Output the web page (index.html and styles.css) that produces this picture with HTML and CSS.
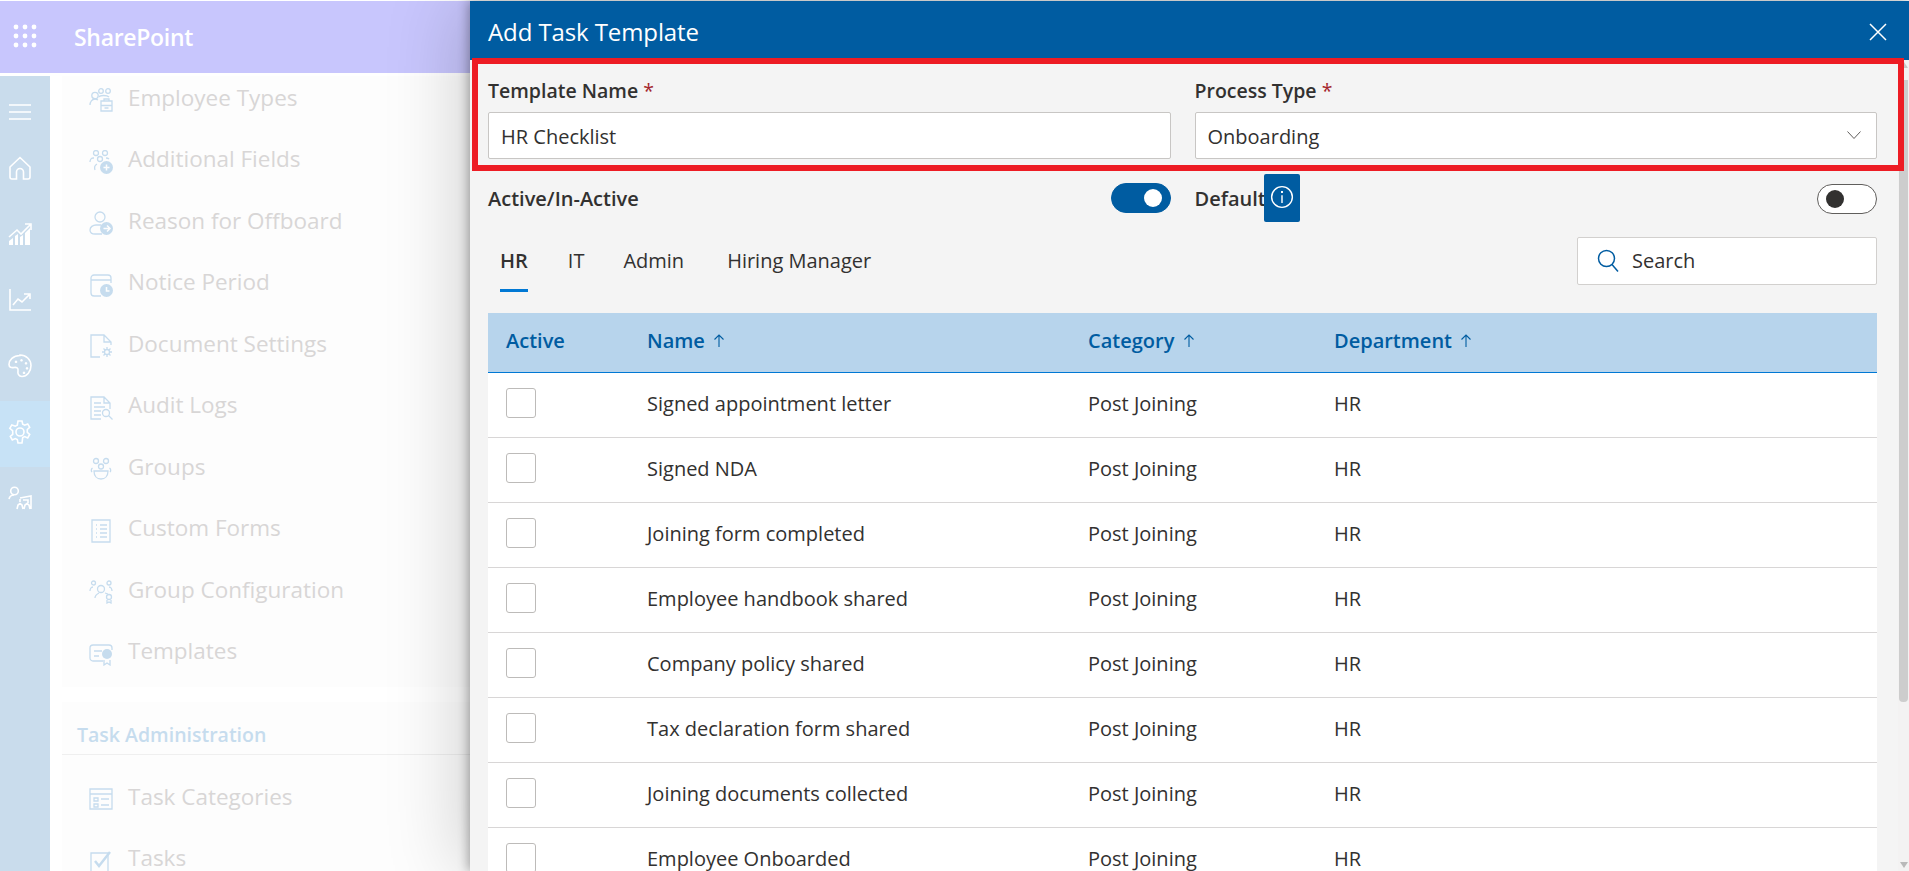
FILE: index.html
```html
<!DOCTYPE html>
<html>
<head>
    <title>Add Task Template</title>
    <meta charset="utf-8">
    <link rel="stylesheet" href="styles.css">
</head>
<body>
    <div class="suite-bar">
        <svg class="waffle" viewBox="0 0 24 24"><g fill="#fff"><circle cx="3" cy="3" r="2.400"/><circle cx="12" cy="3" r="2.400"/><circle cx="21" cy="3" r="2.400"/><circle cx="3" cy="12" r="2.400"/><circle cx="12" cy="12" r="2.400"/><circle cx="21" cy="12" r="2.400"/><circle cx="3" cy="21" r="2.400"/><circle cx="12" cy="21" r="2.400"/><circle cx="21" cy="21" r="2.400"/></g></svg>
        <span class="suite-name">SharePoint</span>
    </div>

    <div class="app-body">
        <div class="rail">
            <div class="rail-item rail-menu"><svg viewBox="0 0 24 24"><path d="M1 5h22M1 12h22M1 19h22"/></svg></div>
            <div class="rail-item"><svg viewBox="0 0 24 24"><path d="M2 11 12 1.500 22 11v10a2 2 0 0 1-2 2h-4.500v-7a3.500 3.500 0 0 0-7 0v7H4a2 2 0 0 1-2-2z"/></svg></div>
            <div class="rail-item"><svg viewBox="0 0 24 24"><path d="M1 15 9 8l4 4 9-9M17 2h6v6"/><path class="solid" d="M1 23v-4l4-3v7zM7 23v-9l3-2v11zM12 23v-8l3-2v10zM17 23V11l5-5v17z"/></svg></div>
            <div class="rail-item"><svg viewBox="0 0 24 24"><path d="M2 1v21h21M5 17l5-6 4 3 7-7M16 6h6v5"/></svg></div>
            <div class="rail-item"><svg viewBox="0 0 24 24"><path d="M12 1.500C5 1.500 1 6 1 10.500c0 3 2.500 3.500 5 3 2.500-.5 4.500.5 4 3-.5 3 .5 6 4 6 5 0 9-5 9-11s-5-10.500-11-10.500z"/><path class="solid" d="M8 6.500a1.300 1.300 0 1 0 .01 0zM13.500 5a1.300 1.300 0 1 0 .01 0zM18 8a1.300 1.300 0 1 0 .01 0zM19 13a1.300 1.300 0 1 0 .01 0zM16 17.500a1.300 1.300 0 1 0 .01 0z"/></svg></div>
            <div class="rail-item rail-active"><svg viewBox="0 0 24 24"><circle cx="12" cy="12" r="4"/><path d="M10 1h4l.7 3.200 2 1 3-1.300 2 3.400-2.400 2.200v2.800l2.400 2.200-2 3.400-3-1.300-2 1L14 23h-4l-.7-3.400-2-1-3 1.300-2-3.400 2.400-2.200V12l-.1-1.300L1.800 8.300l2-3.400 3.500 1.300 2-1z"/></svg></div>
            <div class="rail-item"><svg viewBox="0 0 24 24"><circle cx="6.500" cy="5" r="3.800"/><path d="M1 13c.5-2 2.500-4 5-4M9 23l1-4 2-1.500 2 1.500 1 4M16 23l1-4 2-1.500 2 1.500 1 4M12 12l11-2v13M12 13v3M15 14h5v3"/></svg></div>
        </div>

        <div class="menu">
            <div class="menu-item"><svg viewBox="0 0 24 24"><circle cx="6" cy="7.500" r="3.200"/><circle cx="12" cy="3" r="2.300"/><circle cx="19" cy="3" r="2.300"/><path d="M1 17c0-3 2-6 5-6 1 0 2 .5 3 1M10 9c1-2 8-2 10 0M12 13h11v10H12zM12 17.500h11M15.500 20h4M15 13v-2h5v2"/></svg><span>Employee Types</span></div>
            <div class="menu-item"><svg viewBox="0 0 24 24"><circle cx="7" cy="3" r="2.500"/><circle cx="16" cy="3" r="2.500"/><circle cx="11" cy="9" r="2.500"/><path d="M1 12c0-2 1-4 3-4h1M20 9c-1-1-2-1-3-1M6 20c-1-3 0-5 2-6"/><circle class="solid" cx="17.500" cy="17.500" r="6.500"/><path class="on-solid" d="M17.500 14.500v6M14.500 17.500h6"/></svg><span>Additional Fields</span></div>
            <div class="menu-item"><svg viewBox="0 0 24 24"><circle cx="11" cy="6" r="5"/><path d="M13 23H6c-3 0-5-1-5-4 0-3 3-5 6-5h5"/><circle class="solid" cx="17.500" cy="17.500" r="6.500"/><path class="on-solid" d="M14.500 17.500h6M18 14.500l3 3-3 3"/></svg><span>Reason for Offboard</span></div>
            <div class="menu-item"><svg viewBox="0 0 24 24"><path d="M2 5a3 3 0 0 1 3-3h14a3 3 0 0 1 3 3v5M2 5v15a3 3 0 0 0 3 3h7M2 7h20"/><circle class="solid" cx="17.500" cy="17.500" r="6.500"/><path class="on-solid" d="M17.500 14v4h3"/></svg><span>Notice Period</span></div>
            <div class="menu-item"><svg viewBox="0 0 24 24"><path d="M11 23H2V1h13l7 7v3M15 1v7h7"/><circle cx="18" cy="18" r="2.500"/><path d="M18 13v2M18 21v2M13 18h2M21 18h2M14.500 14.500 16 16M20 20l1.500 1.500M14.500 21.500 16 20M20 16l1.500-1.500"/></svg><span>Document Settings</span></div>
            <div class="menu-item"><svg viewBox="0 0 24 24"><path d="M12 23H2V1h13l6 6v6M15 1v6h6M5 7h7M5 11h11M5 15h7M5 19h7"/><circle cx="17" cy="17" r="3.500"/><path d="m19.500 19.500 4 4"/></svg><span>Audit Logs</span></div>
            <div class="menu-item"><svg viewBox="0 0 24 24"><circle cx="7" cy="4" r="2.500"/><circle cx="17" cy="4" r="2.500"/><circle cx="12" cy="9.500" r="2.500"/><path d="M3 15c-1-1-1-3 .5-4M21 15c1-1 1-3-.5-4M5 14h14c0 5-3 8-7 8s-7-3-7-8z"/></svg><span>Groups</span></div>
            <div class="menu-item"><svg viewBox="0 0 24 24"><path d="M3 1h18v22H3zM7 6h1M11 6h7M7 10h1M11 10h7M7 14h1M11 14h7M7 18h1M11 18h7"/></svg><span>Custom Forms</span></div>
            <div class="menu-item"><svg viewBox="0 0 24 24"><circle cx="4.500" cy="3" r="2"/><circle cx="20" cy="3" r="2"/><circle cx="12" cy="9" r="3.500"/><path d="M1 11c0-2 1-4 3-4M23 11c0-2-1-4-3-4M6 18c0-3 2-4 4-5M19 14l-3-1"/><circle cx="20" cy="17" r="2.500"/><path d="M18 20v3l2-1 2 1v-3"/></svg><span>Group Configuration</span></div>
            <div class="menu-item"><svg viewBox="0 0 24 24"><path d="M14 19H4a3 3 0 0 1-3-3V6a3 3 0 0 1 3-3h16a3 3 0 0 1 3 3v2M5 9h8M5 14h5"/><circle class="solid" cx="18" cy="12" r="5"/><path class="on-line" d="M15 18v5l3-2 3 2v-5"/></svg><span>Templates</span></div>
            <div class="menu-gap"></div>
            <div class="menu-section">Task Administration</div>
            <div class="menu-item"><svg viewBox="0 0 24 24"><path d="M1 2h22v20H1zM1 7h22M5 11h4v3H5zM5 17h4v3H5zM12 12h8M12 18h8"/></svg><span>Task Categories</span></div>
            <div class="menu-item"><svg viewBox="0 0 24 24"><path d="M2 4h17v19H2z"/><path class="thick" d="m6 12 4 5 11-14"/></svg><span>Tasks</span></div>
        </div>
    </div>

    <div class="panel">
        <div class="panel-head">
            <span class="panel-title">Add Task Template</span>
            <svg class="panel-close" viewBox="0 0 18 18"><path d="M1 1l16 16M17 1 1 17"/></svg>
        </div>

        <div class="panel-main">
            <div class="panel-content">
                <div class="form-row">
                    <div class="field">
                        <label>Template Name <em>*</em></label>
                        <div class="text-box">HR Checklist</div>
                    </div>
                    <div class="field">
                        <label>Process Type <em>*</em></label>
                        <div class="text-box select-box">
                            Onboarding
                            <svg viewBox="0 0 14 8"><path d="M.5.500 7 7.500l6.500-7"/></svg>
                        </div>
                    </div>
                </div>

                <div class="form-row toggle-row">
                    <div class="toggle-field">
                        <span class="toggle-label">Active/In-Active</span>
                        <span class="toggle toggle-on"><i></i></span>
                    </div>
                    <div class="toggle-field">
                        <span class="toggle-label">Default<span class="info-btn"><svg viewBox="0 0 22 22"><circle cx="11" cy="11" r="9.500"/><path d="M11 9.500v7"/><path class="dot" d="M11 5.500v1.800"/></svg></span></span>
                        <span class="toggle"><i></i></span>
                    </div>
                </div>

                <div class="tabs-row">
                    <div class="tabs">
                        <span class="tab tab-active">HR</span>
                        <span class="tab">IT</span>
                        <span class="tab">Admin</span>
                        <span class="tab">Hiring Manager</span>
                    </div>
                    <div class="search-box">
                        <svg viewBox="0 0 22 24"><circle cx="9.500" cy="9.500" r="8"/><path d="m15 15.500 6 7"/></svg>
                        <span>Search</span>
                    </div>
                </div>

                <table class="task-table">
                    <thead>
                        <tr>
                            <th class="col-active">Active</th>
                            <th class="col-name">Name <svg class="sort" viewBox="0 0 12 14"><path d="M6 13V1M1.500 5.500 6 1l4.500 4.500"/></svg></th>
                            <th class="col-category">Category <svg class="sort" viewBox="0 0 12 14"><path d="M6 13V1M1.500 5.500 6 1l4.500 4.500"/></svg></th>
                            <th>Department <svg class="sort" viewBox="0 0 12 14"><path d="M6 13V1M1.500 5.500 6 1l4.500 4.500"/></svg></th>
                        </tr>
                    </thead>
                    <tbody>
                        <tr><td><span class="check"></span></td><td>Signed appointment letter</td><td>Post Joining</td><td>HR</td></tr>
                        <tr><td><span class="check"></span></td><td>Signed NDA</td><td>Post Joining</td><td>HR</td></tr>
                        <tr><td><span class="check"></span></td><td>Joining form completed</td><td>Post Joining</td><td>HR</td></tr>
                        <tr><td><span class="check"></span></td><td>Employee handbook shared</td><td>Post Joining</td><td>HR</td></tr>
                        <tr><td><span class="check"></span></td><td>Company policy shared</td><td>Post Joining</td><td>HR</td></tr>
                        <tr><td><span class="check"></span></td><td>Tax declaration form shared</td><td>Post Joining</td><td>HR</td></tr>
                        <tr><td><span class="check"></span></td><td>Joining documents collected</td><td>Post Joining</td><td>HR</td></tr>
                        <tr><td><span class="check"></span></td><td>Employee Onboarded</td><td>Post Joining</td><td>HR</td></tr>
                    </tbody>
                </table>
            </div>

            <div class="scrollbar">
                <div class="scroll-up"></div>
                <div class="scroll-thumb"></div>
                <div class="scroll-track"></div>
                <div class="scroll-down"></div>
            </div>
        </div>

        <div class="red-box"></div>
    </div>
</body>
</html>
```

FILE: styles.css
```css
html, body { margin: 0; padding: 0; height: 100%; overflow: hidden; }
body { background: #fff; font-family: "Open Sans", "Noto Sans", sans-serif; color: #323130; padding-top: 1px; box-sizing: border-box; position: relative; }

.suite-bar { height: 72px; background: #c8c6fd; display: flex; align-items: center; }
.waffle { width: 24px; height: 24px; margin: 0 0 2px 13px; }
.suite-name { margin-left: 37px; color: #fff; font-size: 23px; font-weight: 600; letter-spacing: -.3px; }

.app-body { display: flex; margin-top: 3px; height: 796px; overflow: hidden; }

.rail { width: 50px; flex: none; background: #c9dcec; }
.rail-item { height: 66px; display: flex; align-items: center; padding-left: 8px; box-sizing: border-box; }
.rail-item svg { width: 24px; height: 24px; fill: none; stroke: #fff; stroke-width: 1.6; margin-top: -4px; }
.rail-item svg .solid { fill: #fff; stroke: none; }
.rail-menu { height: 61px; padding-top: 15px; }
.rail-active { background: #c7e2f6; }

.menu { flex: 1; margin-left: 12px; background: #fdfdfd; margin-top: -9px; }
.menu-item { height: 61.500px; display: flex; align-items: center; padding-left: 27px; gap: 15px; }
.menu-item svg { width: 24px; height: 24px; flex: none; fill: none; stroke: #c6dcee; stroke-width: 1.300; margin-top: 5px; }
.menu-item svg .solid { fill: #c6dcee; stroke: none; }
.menu-item svg .on-solid { stroke: #fdfdfd; stroke-width: 1.500; }
.menu-item svg .thick { stroke-width: 2.500; }
.menu-item span { font-size: 22.500px; line-height: 24px; color: #d8d6d6; }
.menu-gap { height: 15px; margin-top: 5px; background: #fff; }
.menu-section { height: 53px; padding: 18px 0 0 15px; box-sizing: border-box; border-bottom: 1px solid #efefef; font-size: 19.500px; font-weight: 600; color: #c6dcee; margin-bottom: 11px; line-height: 30px; }

.panel { position: absolute; top: 1px; left: 470px; right: 0; bottom: 0; background: #f4f4f4; box-shadow: -2px 0 10px rgba(0, 0, 0, .3), -10px 0 70px rgba(0, 0, 0, .18); display: flex; flex-direction: column; }
.panel-head { height: 59px; flex: none; background: #005ca1; display: flex; align-items: center; justify-content: space-between; padding: 0 22px 0 18px; box-sizing: border-box; }
.panel-title { color: #fff; font-size: 24px; letter-spacing: -.1px; margin-top: 2px; }
.panel-close { width: 18px; height: 18px; fill: none; stroke: #fff; stroke-width: 1.500; margin-top: 3px; }

.panel-main { flex: 1; display: flex; min-height: 0; }
.panel-content { flex: 1; padding: 0 21px 0 18px; overflow: hidden; }

.form-row { display: flex; gap: 24px; }
.field { flex: 1; padding-top: 16px; }
.field label { display: block; font-size: 19.500px; font-weight: 600; line-height: 30px; height: 36px; }
.field em { font-style: normal; font-weight: 400; color: #a4262c; }
.text-box { height: 47px; background: #fff; border: 1px solid #c8c6c4; border-radius: 2px; box-sizing: border-box; padding-left: 12px; font-size: 20px; line-height: 48px; }
.select-box { position: relative; }
.select-box svg { position: absolute; right: 15px; top: 18px; width: 14px; height: 8px; fill: none; stroke: #605e5c; stroke-width: 1; }

.toggle-row { height: 79px; }
.toggle-field { flex: 1; display: flex; justify-content: space-between; height: 64px; align-items: flex-start; padding-top: 15px; box-sizing: border-box; }
.toggle-label { display: flex; font-size: 20px; font-weight: 600; line-height: 49px; position: relative; height: 48px; }
.toggle { width: 60px; height: 30px; border-radius: 15px; border: 1px solid #605e5c; background: #fff; box-sizing: border-box; display: flex; align-items: center; padding: 0 8px; margin-top: 10px; }
.toggle i { width: 18px; height: 18px; border-radius: 50%; background: #323130; }
.toggle-on { background: #005ca1; border-color: #005ca1; justify-content: flex-end; margin-top: 9px; }
.toggle-on i { background: #fff; }
.info-btn { width: 36px; height: 48px; margin-left: -2px; background: #005ca1; border-radius: 2px; display: flex; align-items: center; justify-content: center; }
.info-btn svg { width: 24px; height: 24px; fill: none; stroke: #fff; stroke-width: 1.300; margin-bottom: 2px; }
.info-btn .dot { stroke-width: 1.800; }

.tabs-row { display: flex; justify-content: space-between; height: 75px; }
.tabs { display: flex; height: 60px; margin-top: -6px; }
.tab { font-size: 20px; line-height: 58px; padding: 0 12px; margin-right: 16px; position: relative; white-space: nowrap; }
.tab:nth-child(2) { margin-right: 15px; }
.tab:nth-child(3) { margin-right: 19px; }
.tab-active { font-weight: 600; }
.tab-active::after { content: ""; position: absolute; left: 12px; right: 12px; bottom: 0; height: 3px; background: #0078d4; }
.search-box { width: 300px; height: 48px; margin-top: -1px; background: #fff; border: 1px solid #d2d0ce; border-radius: 2px; box-sizing: border-box; display: flex; align-items: center; padding-left: 19px; gap: 13px; font-size: 20px; line-height: 48px; }
.search-box svg { width: 22px; height: 24px; fill: none; stroke: #005ca1; stroke-width: 1.500; flex: none; }

.task-table { width: 1389px; border-collapse: separate; border-spacing: 0; table-layout: fixed; background: #fff; font-size: 20px; }
.task-table th { height: 60px; background: #b7d4ec; color: #005ca1; font-weight: 600; text-align: left; padding: 0 0 5px 18px; border-bottom: 1px solid #0078d4; box-sizing: border-box; }
.task-table td { height: 65px; padding: 0 0 4px 18px; border-bottom: 1px solid #d8d6d6; box-sizing: border-box; }
.col-active { width: 141px; }
.col-name { width: 441px; }
.col-category { width: 246px; }
.sort { width: 12px; height: 14px; fill: none; stroke: #005ca1; stroke-width: 1.100; margin-left: 3px; }
.check { display: block; width: 30px; height: 30px; border: 1px solid #bdbbb9; border-radius: 3px; box-sizing: border-box; background: #fff; }

.scrollbar { width: 11px; flex: none; background: #f3f2f2; display: flex; flex-direction: column; align-items: center; }
.scroll-up { width: 0; height: 0; margin-top: 2px; border: 4.500px solid transparent; border-top: 0; border-bottom: 6px solid #c8c8c8; }
.scroll-thumb { width: 9px; height: 622px; margin-top: 12px; background: #cdcdcd; border-radius: 0 0 4px 4px; }
.scroll-track { flex: 1; }
.scroll-down { width: 0; height: 0; margin-bottom: 3px; border: 4.500px solid transparent; border-bottom: 0; border-top: 6px solid #b9b9b9; }

/* annotation drawn on top of the screenshot */
.red-box { position: absolute; left: 2px; top: 57px; width: 1432px; height: 113px; border: 6px solid #ed1c24; box-sizing: border-box; }
```
